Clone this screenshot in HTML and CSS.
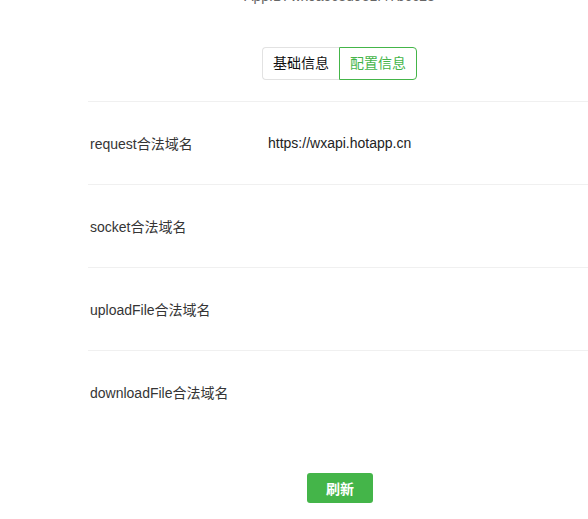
FILE: index.html
```html
<!DOCTYPE html>
<html lang="zh-CN">
<head>
<meta charset="utf-8">
<title>配置信息</title>
<link rel="stylesheet" href="styles.css">
</head>
<body>
<div class="page">
  <div class="appid">AppID: wx0a5c3d9e1f47b6c28</div>
  <div class="tabs">
    <span class="tab">基础信息</span>
    <span class="tab active">配置信息</span>
  </div>
  <div class="list">
    <div class="row"><span class="label">request合法域名</span><span class="value">https://wxapi.hotapp.cn</span></div>
    <div class="row"><span class="label">socket合法域名</span><span class="value"></span></div>
    <div class="row"><span class="label">uploadFile合法域名</span><span class="value"></span></div>
    <div class="row last"><span class="label">downloadFile合法域名</span><span class="value"></span></div>
  </div>
  <div class="actions">
    <button class="btn">刷新</button>
  </div>
</div>
</body>
</html>
```
FILE: styles.css
```css
html, body {
  margin: 0;
  padding: 0;
  overflow: hidden;
  background: #fff;
}
body {
  font-family: "Liberation Sans", "Noto Sans CJK SC", sans-serif;
  font-size: 14px;
  color: #353535;
}
.page {
  margin-left: 88px;
  width: 503px;
}
.appid {
  margin-top: -14px;
  height: 20px;
  line-height: 20px;
  text-align: center;
  color: #666;
}
.tabs {
  margin-top: 41px;
  display: flex;
  justify-content: center;
}
.tab {
  display: block;
  height: 31px;
  line-height: 31px;
  padding: 0 10px;
  border: 1px solid #e2e2e2;
  border-right: none;
  border-radius: 4px 0 0 4px;
  color: #111;
}
.tab.active {
  border: 1px solid #44b549;
  border-radius: 0 4px 4px 0;
  color: #44b549;
}
.list {
  margin-top: 21px;
}
.row {
  display: flex;
  align-items: center;
  height: 81px;
  padding-bottom: 1px;
  border-top: 1px solid #f0f0f0;
  padding-left: 2px;
}
.label {
  width: 178px;
}
.value {
  color: #222;
}
.actions {
  margin-top: 40px;
  display: flex;
  justify-content: center;
}
.btn {
  width: 66px;
  height: 30px;
  border: none;
  border-radius: 3px;
  background: #44b549;
  color: #fff;
  font-family: "Liberation Sans", "Noto Sans CJK SC", sans-serif;
  font-size: 14px;
  font-weight: bold;
  padding: 0;
  margin-left: 1px;
}
```
